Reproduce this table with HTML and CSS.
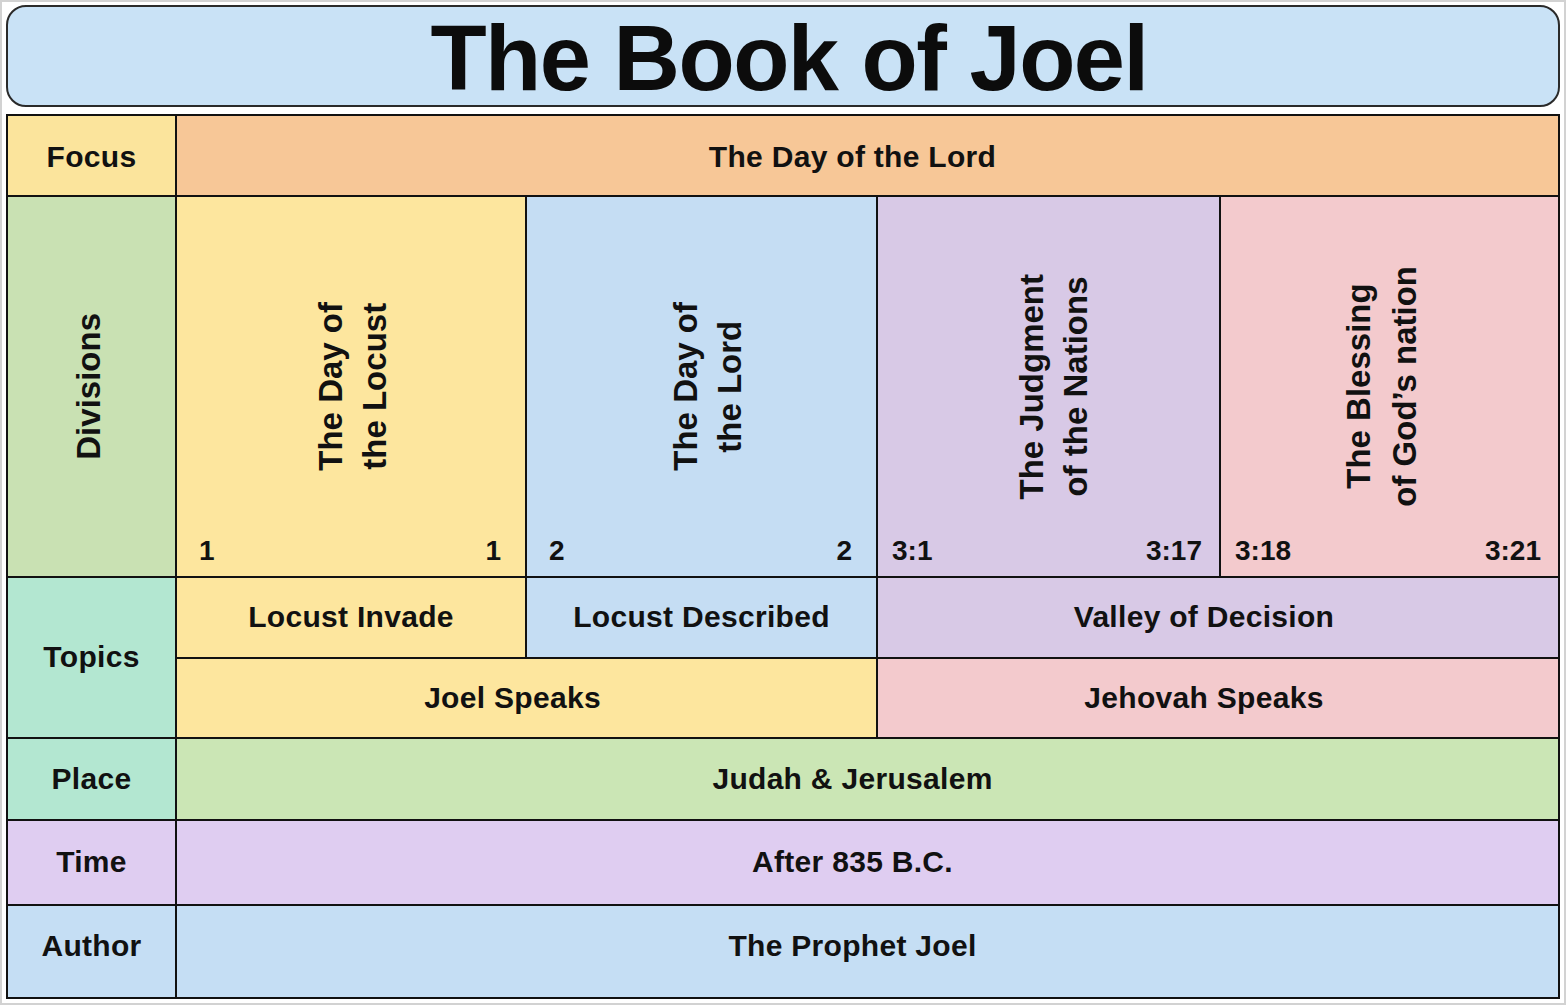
FILE: index.html
```html
<!DOCTYPE html>
<html lang="en">
<head>
<meta charset="utf-8">
<title>The Book of Joel</title>
<link rel="stylesheet" href="styles.css">
</head>
<body>
<div class="frame">
  <header class="title-box">
    <h1 class="title">The Book of Joel</h1>
  </header>
  <div class="chart">
    <div class="cell label c-gold row-focus">Focus</div>
    <div class="cell span-all c-orange row-focus">The Day of the Lord</div>

    <div class="cell label c-green div-label"><span class="vtext">Divisions</span></div>
    <div class="cell division c-yellow wide">
      <span class="vtext nudge-1">The Day of<br>the Locust</span>
      <div class="verses"><span>1</span><span>1</span></div>
    </div>
    <div class="cell division c-blue wide">
      <span class="vtext nudge-2">The Day of<br>the Lord</span>
      <div class="verses"><span>2</span><span>2</span></div>
    </div>
    <div class="cell division c-purple">
      <span class="vtext nudge-3">The Judgment<br>of the Nations</span>
      <div class="verses"><span>3:1</span><span>3:17</span></div>
    </div>
    <div class="cell division c-pink">
      <span class="vtext nudge-4">The Blessing<br>of God’s nation</span>
      <div class="verses"><span>3:18</span><span>3:21</span></div>
    </div>

    <div class="cell label c-mint topics">Topics</div>
    <div class="cell c-yellow">Locust Invade</div>
    <div class="cell c-blue">Locust Described</div>
    <div class="cell span-2 c-purple">Valley of Decision</div>
    <div class="cell span-2 c-yellow">Joel Speaks</div>
    <div class="cell span-2 c-pink">Jehovah Speaks</div>

    <div class="cell label c-mint">Place</div>
    <div class="cell span-all c-lime">Judah &amp; Jerusalem</div>

    <div class="cell label c-lavender">Time</div>
    <div class="cell span-all c-lavender">After 835 B.C.</div>

    <div class="cell label c-sky row-author">Author</div>
    <div class="cell span-all c-sky row-author">The Prophet Joel</div>
  </div>
</div>
</body>
</html>
```

FILE: styles.css
```css
* {
  box-sizing: border-box;
}

html, body {
  margin: 0;
  padding: 0;
  background: #ffffff;
}

body {
  font-family: "Liberation Sans", Arial, Helvetica, sans-serif;
  color: #111111;
}

.frame {
  width: 1566px;
  height: 1005px;
  border: 2px solid #d2d2d2;
  padding: 3px 4px 0 4px;
  background: #ffffff;
}

.title-box {
  height: 102px;
  border: 2px solid #2a2a2a;
  border-radius: 20px;
  background: #c9e2f6;
  display: flex;
  align-items: center;
  justify-content: center;
  padding-top: 4px;
  padding-left: 12px;
}

.title {
  margin: 0;
  font-size: 92px;
  line-height: 1;
  font-weight: 700;
  letter-spacing: -1.5px;
  color: #0c0c0c;
}

.chart {
  margin-top: 7px;
  display: grid;
  grid-template-columns: 167px 348px 349px 341px 337px;
  grid-template-rows: 79px 379px 79px 78px 80px 83px 91px;
  gap: 2px;
  padding: 2px;
  background: #111111;
}

.cell {
  display: flex;
  align-items: center;
  justify-content: center;
  font-size: 30px;
  font-weight: 700;
  letter-spacing: 0.3px;
  line-height: 1.15;
  text-align: center;
}

.label {
  grid-column: 1;
}

.topics {
  grid-row: span 2;
}

.span-all {
  grid-column: 2 / span 4;
  padding-right: 30px;
}

.span-2 {
  grid-column: span 2;
  padding-right: 28px;
}

.row-focus {
  padding-top: 3px;
}

.row-author {
  padding-bottom: 10px;
}

.div-label {
  padding-right: 6px;
}

.vtext {
  writing-mode: vertical-rl;
  transform: rotate(180deg);
  font-size: 33px;
  letter-spacing: 0;
  line-height: 44px;
  text-align: center;
  white-space: nowrap;
}

.division {
  display: grid;
  grid-template-columns: 1fr;
  grid-template-rows: 1fr;
}

.division .vtext {
  grid-area: 1 / 1;
  place-self: center;
}

.division .nudge-1 { margin-left: 4px; }
.division .nudge-2 { margin-left: 12px; }
.division .nudge-3 { margin-left: 10px; }
.division .nudge-4 { margin-right: 16px; line-height: 46px; }

.division .verses {
  grid-area: 1 / 1;
  align-self: end;
  display: flex;
  justify-content: space-between;
  font-size: 28px;
  letter-spacing: 0;
  line-height: 32px;
  padding: 0 17px 9px 14px;
}

.division.wide .verses {
  padding: 0 24px 9px 22px;
}

.c-gold { background: #fbe49c; }
.c-orange { background: #f7c797; }
.c-green { background: #c9e1b3; }
.c-yellow { background: #fde69e; }
.c-blue { background: #c5ddf3; }
.c-purple { background: #d8c9e6; }
.c-pink { background: #f3cacd; }
.c-mint { background: #b3e7d1; }
.c-lime { background: #cbe6b5; }
.c-lavender { background: #dfcdf1; }
.c-sky { background: #c5def4; }
```
